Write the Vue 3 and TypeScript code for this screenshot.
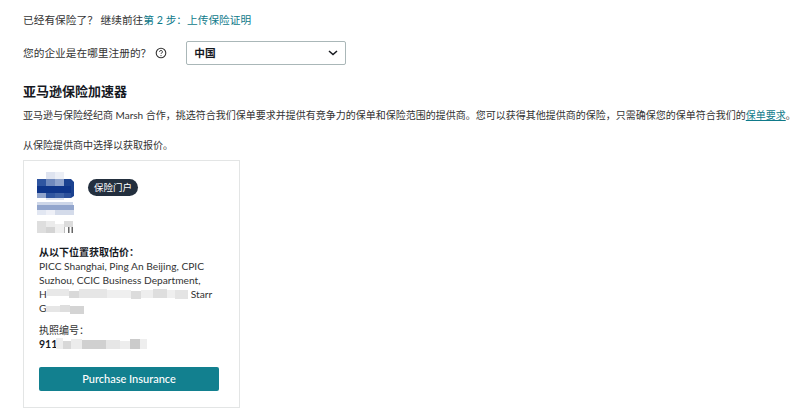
<script setup lang="ts">
interface Cell { x: number; y: number; w: number; h: number; c: string }
const logoCells: Cell[] = [
  { x: 9, y: 0, w: 9, h: 7, c: '#dfe4f0' }, { x: 18, y: 0, w: 9, h: 7, c: '#eceff6' },
  { x: 0, y: 7, w: 9, h: 7, c: '#2f55a0' }, { x: 9, y: 7, w: 9, h: 7, c: '#6f89bd' }, { x: 18, y: 7, w: 9, h: 7, c: '#8ea3cc' }, { x: 27, y: 7, w: 7, h: 7, c: '#1b4290' },
  { x: 0, y: 14, w: 37, h: 7, c: '#0e358a' },
  { x: 0, y: 21, w: 9, h: 5, c: '#8fa3cb' }, { x: 9, y: 21, w: 9, h: 5, c: '#2f55a0' }, { x: 18, y: 21, w: 9, h: 5, c: '#3f62a6' }, { x: 27, y: 21, w: 7, h: 5, c: '#2c509b' },
  { x: 9, y: 26, w: 18, h: 2, c: '#dfe4f0' },
  { x: 0, y: 30, w: 36, h: 3, c: '#cdd6e8' },
  { x: 0, y: 33, w: 37, h: 5, c: '#93a6cd' },
  { x: 0, y: 38, w: 9, h: 5, c: '#e2e7f2' }, { x: 9, y: 38, w: 9, h: 5, c: '#eef0f7' }, { x: 18, y: 38, w: 19, h: 5, c: '#d4dbea' },
  { x: 0, y: 49, w: 9, h: 12, c: '#dedede' }, { x: 9, y: 49, w: 9, h: 12, c: '#ebebeb' }, { x: 9, y: 55, w: 9, h: 6, c: '#d4d4d4' },
  { x: 18, y: 52, w: 9, h: 9, c: '#efefef' }, { x: 27, y: 49, w: 9, h: 6, c: '#dcdcdc' },
  { x: 27, y: 55, w: 1, h: 6, c: '#bbb' }, { x: 31, y: 55, w: 1.5, h: 6, c: '#666' }, { x: 34.5, y: 55, w: 1.5, h: 6, c: '#666' },
]
const addressBlur: Cell[] = [
  { x: 0, y: 1, w: 22, h: 7, c: '#e8e8e8' }, { x: 22, y: 3, w: 10, h: 7, c: '#d9d9d9' }, { x: 32, y: 1, w: 28, h: 9, c: '#e6e6e6' },
  { x: 60, y: 2, w: 24, h: 8, c: '#efefef' }, { x: 84, y: 3, w: 10, h: 8, c: '#dcdcdc' }, { x: 94, y: 2, w: 12, h: 8, c: '#eeeeee' },
  { x: 106, y: 1, w: 14, h: 9, c: '#dedede' }, { x: 120, y: 2, w: 8, h: 8, c: '#efefef' }, { x: 128, y: 2, w: 13, h: 9, c: '#e4e4e4' },
]
const licenseBlur: Cell[] = [
  { x: 0, y: 0, w: 7, h: 11, c: '#ededed' }, { x: 7, y: 3, w: 8, h: 8, c: '#d8d8d8' }, { x: 15, y: 1, w: 11, h: 10, c: '#ececec' },
  { x: 26, y: 2, w: 24, h: 9, c: '#d0d0d0' }, { x: 50, y: 2, w: 14, h: 9, c: '#e6e6e6' }, { x: 64, y: 3, w: 10, h: 8, c: '#ededed' },
  { x: 74, y: 1, w: 10, h: 10, c: '#cbcbcb' }, { x: 84, y: 1, w: 7, h: 10, c: '#eeeeee' },
]
</script>

<template>
  <main class="page">
    <p class="line first">已经有保险了？ 继续前往<a class="link">第 2 步：上传保险证明</a></p>
    <div class="question">
      <label class="q-label">您的企业是在哪里注册的？</label>
      <svg class="help" width="12" height="12" viewBox="0 0 12 12" aria-hidden="true">
        <circle cx="6" cy="6" r="4.8" fill="none" stroke="#333" stroke-width="1.1" />
        <path d="M4.6 4.8a1.4 1.4 0 1 1 2.1 1.2c-.5.3-.7.5-.7 1" fill="none" stroke="#333" stroke-width="1" />
        <circle cx="6" cy="8.6" r=".6" fill="#333" />
      </svg>
      <div class="select">
        <span>中国</span>
        <svg width="10" height="6" viewBox="0 0 10 6" aria-hidden="true">
          <path d="M1 1l4 3.6L9 1" fill="none" stroke="#16191f" stroke-width="1.5" />
        </svg>
      </div>
    </div>
    <h2 class="heading">亚马逊保险加速器</h2>
    <p class="line para">亚马逊与保险经纪商 Marsh 合作，挑选符合我们保单要求并提供有竞争力的保单和保险范围的提供商。您可以获得其他提供商的保险，只需确保您的保单符合我们的<a class="link under">保单要求</a>。</p>
    <p class="line choose">从保险提供商中选择以获取报价。</p>
    <section class="card">
      <div class="brand">
        <svg class="logo" width="37" height="61" viewBox="0 0 37 61" aria-hidden="true">
          <rect v-for="(c, i) in logoCells" :key="i" :x="c.x" :y="c.y" :width="c.w" :height="c.h" :fill="c.c" />
          <path d="M34 7l3 3v14l-3 2z" fill="#1b4290" />
        </svg>
        <span class="badge">保险门户</span>
      </div>
      <h3 class="sub">从以下位置获取估价：</h3>
      <div class="places">
        <div>PICC Shanghai, Ping An Beijing, CPIC</div>
        <div>Suzhou, CCIC Business Department,</div>
        <div class="row">
          <span>H</span>
          <svg class="blur" width="141" height="12" viewBox="0 0 141 12" aria-hidden="true">
            <rect v-for="(c, i) in addressBlur" :key="i" :x="c.x" :y="c.y" :width="c.w" :height="c.h" :fill="c.c" />
          </svg>
          <span class="starr">Starr</span>
        </div>
        <div class="row">
          <span>G</span>
          <svg class="blur" width="38" height="12" viewBox="0 0 38 12" aria-hidden="true">
            <rect x="0" y="4" width="14" height="6" fill="#e6e6e6" />
            <rect x="14" y="3" width="10" height="7" fill="#dedede" />
            <rect x="24" y="4" width="14" height="8" fill="#d4d4d4" />
          </svg>
        </div>
      </div>
      <div class="license-label">执照编号：</div>
      <div class="row license">
        <span>911</span>
        <svg class="blur" width="91" height="12" viewBox="0 0 91 12" aria-hidden="true">
          <rect v-for="(c, i) in licenseBlur" :key="i" :x="c.x" :y="c.y" :width="c.w" :height="c.h" :fill="c.c" />
        </svg>
      </div>
      <button class="buy" type="button">Purchase Insurance</button>
    </section>
  </main>
</template>

<style scoped>
.page {
  box-sizing: border-box;
  width: 800px;
  height: 411px;
  overflow: hidden;
  padding: 12px 0 0 23px;
  background: #fff;
  color: #16191f;
  font-family: Lato, "Noto Sans CJK SC", sans-serif;
  font-size: 10.7px;
  line-height: 16px;
}
.line { margin: 0; white-space: nowrap; color: #333; }
.link { color: #0f7a8a; }
.under { text-decoration: underline; }
.question { display: flex; align-items: center; height: 24px; margin-top: 13px; }
.q-label { color: #333; }
.help { margin-left: 4px; }
.select {
  box-sizing: border-box;
  display: flex;
  align-items: center;
  justify-content: space-between;
  width: 160px;
  height: 24px;
  margin-left: 19px;
  padding: 0 7px;
  border: 1px solid #aab7b8;
  border-radius: 2px;
  font-weight: 700;
}
.heading { margin: 16px 0 0; font-size: 13px; line-height: 20px; font-weight: 700; color: #16191f; }
.para { margin-top: 6px; font-size: 10px; }
.choose { margin-top: 14px; font-size: 10px; }
.card {
  box-sizing: border-box;
  width: 217px;
  height: 248px;
  margin-top: 7px;
  padding: 11px 15px 0;
  border: 1px solid #e3e5e5;
  display: flex;
  flex-direction: column;
}
.brand { display: flex; align-items: flex-start; height: 73px; }
.logo { display: block; flex: none; margin-left: -2px; }
.badge {
  margin: 7px 0 0 14px;
  height: 17px;
  padding: 0 6px;
  border-radius: 8.5px;
  background: #232f3e;
  color: #fff;
  font-size: 9.5px;
  line-height: 17px;
}
.sub { margin: 0; font-size: 10px; line-height: 14px; font-weight: 700; }
.places { color: #333; font-size: 10.2px; line-height: 14px; white-space: nowrap; }
.row { display: flex; align-items: center; height: 14px; }
.blur { flex: none; }
.starr { margin-left: 3px; }
.license-label { margin-top: 8px; color: #333; font-size: 10px; line-height: 14px; }
.license { font-weight: 700; font-size: 10.5px; }
.license .blur { margin-left: -1px; }
.buy {
  width: 180px;
  height: 24px;
  margin-top: 16px;
  flex: none;
  padding: 0;
  border: 0;
  border-radius: 2px;
  background: #12808f;
  color: #fff;
  font: 500 11px/24px Lato, sans-serif;
}
</style>
